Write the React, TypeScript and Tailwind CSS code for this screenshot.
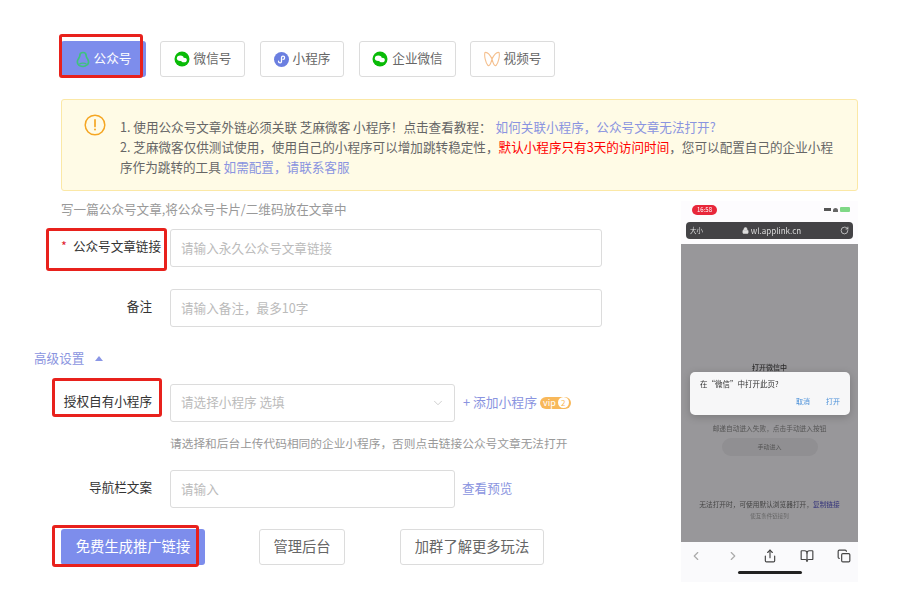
import React from "react";
import { ChevronDown, Share, BookOpen, Copy, ChevronLeft, ChevronRight, Lock, RotateCw } from "lucide-react";

const font = { fontFamily: '"Noto Sans CJK SC","Noto Sans",sans-serif' };

function WeChatIcon() {
  return (
    <svg width="16" height="16" viewBox="0 0 16 16" className="shrink-0">
      <circle cx="8" cy="8" r="7.5" fill="#09bb07" />
      <ellipse cx="6.3" cy="7.2" rx="3.4" ry="2.7" fill="#fff" />
      <ellipse cx="9.9" cy="9" rx="2.9" ry="2.3" fill="#fff" />
    </svg>
  );
}
function MiniIcon() {
  return (
    <svg width="15" height="15" viewBox="0 0 14 14" className="shrink-0">
      <circle cx="7" cy="7" r="7" fill="#6b7fe0" />
      <path d="M4.2 8.6c0 1 .8 1.6 1.6 1.6S7 9.600 7 8.600V5.400c0-1 .6-1.600 1.400-1.600s1.500.6 1.500 1.600-.7 1.500-1.400 1.500" fill="none" stroke="#fff" strokeWidth="1.200" strokeLinecap="round" />
    </svg>
  );
}
function AccountIcon() {
  return (
    <svg width="14" height="17" viewBox="0 0 14 17" className="shrink-0">
      <path d="M7 1.500c2 0 3.200 1.400 3.200 3.200 0 1.300.8 2.200 1.600 3.700 1 2 1 3.500 0 4.800C11 13.800 9.500 15.500 7 15.500s-4-.7-4.900-2.300c-1-1.500-1-3 0-4.800.8-1.500 1.700-2.400 1.700-3.700C3.800 2.900 5 1.500 7 1.500z" fill="none" stroke="#3fc27f" strokeWidth="1.700" />
      <path d="M3.500 13c1.300-1.200 5.500-1.200 7 0" fill="none" stroke="#3fc27f" strokeWidth="1.400" />
    </svg>
  );
}
function VideoIcon() {
  return (
    <svg width="16" height="18" viewBox="0 0 16 18" className="shrink-0">
      <path d="M1 2.500C4 1.500 6.500 6 8 9c1.500-3 4-7.500 7-6.500 1 3-.5 10.500-3 13-2 1-3.200-3.500-4-6.500-.8 3-2 7.500-4 6.500-2.500-2.500-4-10-3-13z" fill="none" stroke="#f5c08f" strokeWidth="1.100" />
    </svg>
  );
}

function Tab({ w, icon, label, active }: { w: string; icon: React.ReactNode; label: string; active?: boolean }) {
  return (
    <div className={`${w} h-[36px] rounded-[3px] flex items-center justify-center gap-[4px] text-[12.600px] ${active ? "bg-[#7d8dec] text-white" : "bg-white border border-[#dcdcdc] text-[#666]"}`}>
      {icon}
      <span className="pb-[2px]">{label}</span>
    </div>
  );
}

function Row({ label, children, mark }: { label: React.ReactNode; children: React.ReactNode; mark?: boolean }) {
  return (
    <div className="flex items-center h-[38px]">
      <div className={`text-[12.600px] text-[#333] text-right whitespace-nowrap pb-[3px] ${mark ? "w-[100px]" : "w-[91px]"} shrink-0`}>{label}</div>
      <div className={`${mark ? "ml-[9px]" : "ml-[18px]"} flex items-center`}>{children}</div>
    </div>
  );
}

const inputClass = "h-[38px] border border-[#dcdcdc] rounded-[3px] pl-[10px] pr-[10px] pb-[2px] text-[12.600px] bg-white outline-none placeholder:text-[#bbb]";

function Phone() {
  return (
    <div className="w-[177px] h-[381px] flex flex-col bg-white overflow-hidden shrink-0">
      <div className="h-[43px] bg-[#fdfcfe] flex flex-col px-[5px] pt-[3px]">
        <div className="flex items-center justify-between pr-[3px] pl-[6px] h-[11px]">
          <div className="w-[25px] h-[10px] rounded-full bg-[#e8273a] text-white text-[6px] leading-[10px] text-center blur-[0.3px]">16:58</div>
          <div className="flex items-center gap-[2px] blur-[0.3px]">
            <div className="w-[7px] h-[3px] bg-[#555]" />
            <div className="w-[5px] h-[4px] bg-[#666] rounded-t-full" />
            <div className="w-[10px] h-[5px] bg-[#7fd886] rounded-[1px]" />
          </div>
        </div>
        <div className="mt-[7px] h-[17px] bg-[#444346] rounded-[4px] flex items-center justify-between px-[4px] text-[#ddd] text-[6.500px] blur-[0.25px]">
          <span>大小</span>
          <span className="flex items-center gap-[2px] text-[8px]"><Lock size={7} fill="#ddd" />wl.applink.cn</span>
          <RotateCw size={9} />
        </div>
      </div>
      <div className="h-[298px] bg-[#98979a] flex flex-col items-center relative pt-[117px]">
        <div className="text-[7px] leading-[12px] text-[#2c2c2c] font-medium blur-[0.25px]">打开微信中</div>
        <div className="absolute left-[9px] top-[128px] w-[160px] h-[43px] bg-[#f7f7f8] rounded-[5px] shadow-[0_2px_8px_rgba(0,0,0,0.2)] px-[10px] pt-[6px] blur-[0.2px]">
          <div className="text-[7.500px] leading-[12px] text-[#333]">在“微信”中打开此页?</div>
          <div className="flex justify-end gap-[16px] text-[7px] leading-[12px] text-[#4a90d9] mt-[5px]">
            <span>取消</span>
            <span>打开</span>
          </div>
        </div>
        <div className="mt-[50px] text-[6.700px] leading-[10px] text-[#555] blur-[0.3px] whitespace-nowrap">邮递自动进入失败，点击手动进入按钮</div>
        <div className="mt-[5px] w-[96px] h-[18px] rounded-full bg-[#908f92] text-[6px] leading-[18px] text-center text-[#555] blur-[0.3px]">手动进入</div>
        <div className="mt-[43px] text-[6.700px] leading-[10px] text-[#444] blur-[0.3px] whitespace-nowrap">
          无法打开时，可使用默认浏览器打开，<span className="text-[#33337a]">复制链接</span>
        </div>
        <div className="mt-[2px] text-[5.500px] leading-[10px] text-[#666] blur-[0.3px]">使互条件链接列</div>
      </div>
      <div className="flex-1 bg-[#fafafc] flex flex-col items-center">
        <div className="w-full flex items-center justify-between pl-[8px] pr-[7px] pt-[7px] text-[#444]">
          <ChevronLeft size={14} className="text-[#aaa]" />
          <ChevronRight size={14} className="text-[#aaa]" />
          <Share size={14} />
          <BookOpen size={14} />
          <Copy size={14} />
        </div>
        <div className="mt-[8px] w-[64px] h-[2.500px] rounded-full bg-[#222]" />
      </div>
    </div>
  );
}

export default function App() {
  return (
    <div className="relative w-[900px] h-[589px] bg-white overflow-hidden" style={font}>
      <div className="pl-[61px] pr-[42px] pt-[41px]">
        <div className="flex">
          <Tab w="w-[85px]" active icon={<AccountIcon />} label="公众号" />
          <div className="ml-[14px]"><Tab w="w-[85px]" icon={<WeChatIcon />} label="微信号" /></div>
          <div className="ml-[15px]"><Tab w="w-[84px]" icon={<MiniIcon />} label="小程序" /></div>
          <div className="ml-[15px]"><Tab w="w-[97px]" icon={<WeChatIcon />} label="企业微信" /></div>
          <div className="ml-[14px]"><Tab w="w-[85px]" icon={<VideoIcon />} label="视频号" /></div>
        </div>

        <div className="mt-[22px] h-[92px] bg-[#fffbe6] border border-[#fbe8a6] rounded-[3px] flex pl-[22px] pr-[24px] pt-[17px]">
          <svg width="22" height="22" viewBox="0 0 22 22" className="shrink-0 -mt-[3px]">
            <circle cx="11" cy="11" r="9.800" fill="none" stroke="#f5a623" strokeWidth="1.500" />
            <path d="M11 5.800v6.700" stroke="#f5a623" strokeWidth="1.700" strokeLinecap="round" />
            <circle cx="11" cy="15.600" r="1" fill="#f5a623" />
          </svg>
          <div className="ml-[14px] text-[12.600px] leading-[20px] text-[#666] whitespace-nowrap">
            <div>
              1. 使用公众号文章外链必须关联 芝麻微客 小程序！点击查看教程：
              <span className="text-[#8a94e0] ml-[4px]">如何关联小程序，公众号文章无法打开?</span>
            </div>
            <div>
              2. 芝麻微客仅供测试使用，使用自己的小程序可以增加跳转稳定性，<span className="text-[#f00]">默认小程序只有3天的访问时间</span>，您可以配置自己的企业小程
            </div>
            <div>
              序作为跳转的工具 <span className="text-[#8a94e0]">如需配置，请联系客服</span>
            </div>
          </div>
        </div>

        <div className="flex mt-[10px] justify-between">
          <div className="flex flex-col">
            <div className="-mt-[2px] text-[12.600px] leading-[20px] text-[#999]">写一篇公众号文章,将公众号卡片/二维码放在文章中</div>
            <div className="mt-[10px]">
              <Row mark label={<><span className="text-[#e0202f] mr-[6px]">*</span>公众号文章链接</>}>
                <input readOnly placeholder="请输入永久公众号文章链接" className={`${inputClass} w-[432px]`} />
              </Row>
            </div>
            <div className="mt-[22px]">
              <Row label="备注">
                <input readOnly placeholder="请输入备注，最多10字" className={`${inputClass} w-[432px]`} />
              </Row>
            </div>
            <div className="mt-[21px] flex items-center -ml-[27px] text-[12.600px] leading-[20px] text-[#8a94e0]">
              <span className="pb-[1px]">高级设置</span>
              <span className="ml-[11px] w-0 h-0 border-x-[4.500px] border-x-transparent border-b-[5px] border-b-[#8a96e6]" />
            </div>
            <div className="mt-[15px]">
              <Row label="授权自有小程序">
                <div className="w-[285px] h-[38px] border border-[#dcdcdc] rounded-[3px] pl-[10px] pr-[11px] pb-[1px] flex items-center justify-between text-[12.600px] text-[#bbb]">
                  <span>请选择小程序 选填</span>
                  <ChevronDown size={14} strokeWidth={1.200} className="text-[#bbb] -mr-[2px]" />
                </div>
                <span className="ml-[8px] pb-[2px] text-[12.800px] text-[#8a94e0]">+ 添加小程序</span>
                <span className="ml-[3px] mb-[1px] w-[31px] h-[12px] rounded-full bg-[#f8b85a] flex items-center pl-[3px] gap-[2px] text-[9px] leading-none text-white">
                  vip
                  <span className="w-[11px] h-[11px] rounded-full bg-white text-[#f8b85a] text-center text-[8px] leading-[11px]">2</span>
                </span>
              </Row>
            </div>
            <div className="mt-[11px] ml-[109px] text-[11.700px] leading-[20px] text-[#999] whitespace-nowrap">请选择和后台上传代码相同的企业小程序，否则点击链接公众号文章无法打开</div>
            <div className="mt-[17px]">
              <Row label="导航栏文案">
                <input readOnly placeholder="请输入" className={`${inputClass} w-[285px]`} />
                <span className="ml-[7px] pb-[2px] text-[12.600px] text-[#8a94e0]">查看预览</span>
              </Row>
            </div>
            <div className="mt-[21px] flex">
              <div className="w-[144px] h-[36px] pb-[2px] rounded-[3px] bg-[#7d8dec] text-white text-[14.300px] flex items-center justify-center">免费生成推广链接</div>
              <div className="ml-[54px] w-[86px] h-[36px] pb-[2px] rounded-[3px] border border-[#dcdcdc] text-[#666] text-[14.300px] flex items-center justify-center">管理后台</div>
              <div className="ml-[55px] w-[144px] h-[36px] pb-[2px] rounded-[3px] border border-[#dcdcdc] text-[#666] text-[14.300px] flex items-center justify-center">加群了解更多玩法</div>
            </div>
          </div>
          <Phone />
        </div>
      </div>

      <div className="absolute left-[59px] top-[34px] w-[84px] h-[44px] border-[3px] border-[#e8211c] rounded-[3px]" />
      <div className="absolute left-[46px] top-[228px] w-[121px] h-[43px] border-[3px] border-[#e8211c] rounded-[3px]" />
      <div className="absolute left-[52px] top-[378px] w-[110px] h-[39px] border-[3px] border-[#e8211c] rounded-[3px]" />
      <div className="absolute left-[52px] top-[525px] w-[147px] h-[42px] border-[3px] border-[#e8211c] rounded-[3px]" />
    </div>
  );
}
